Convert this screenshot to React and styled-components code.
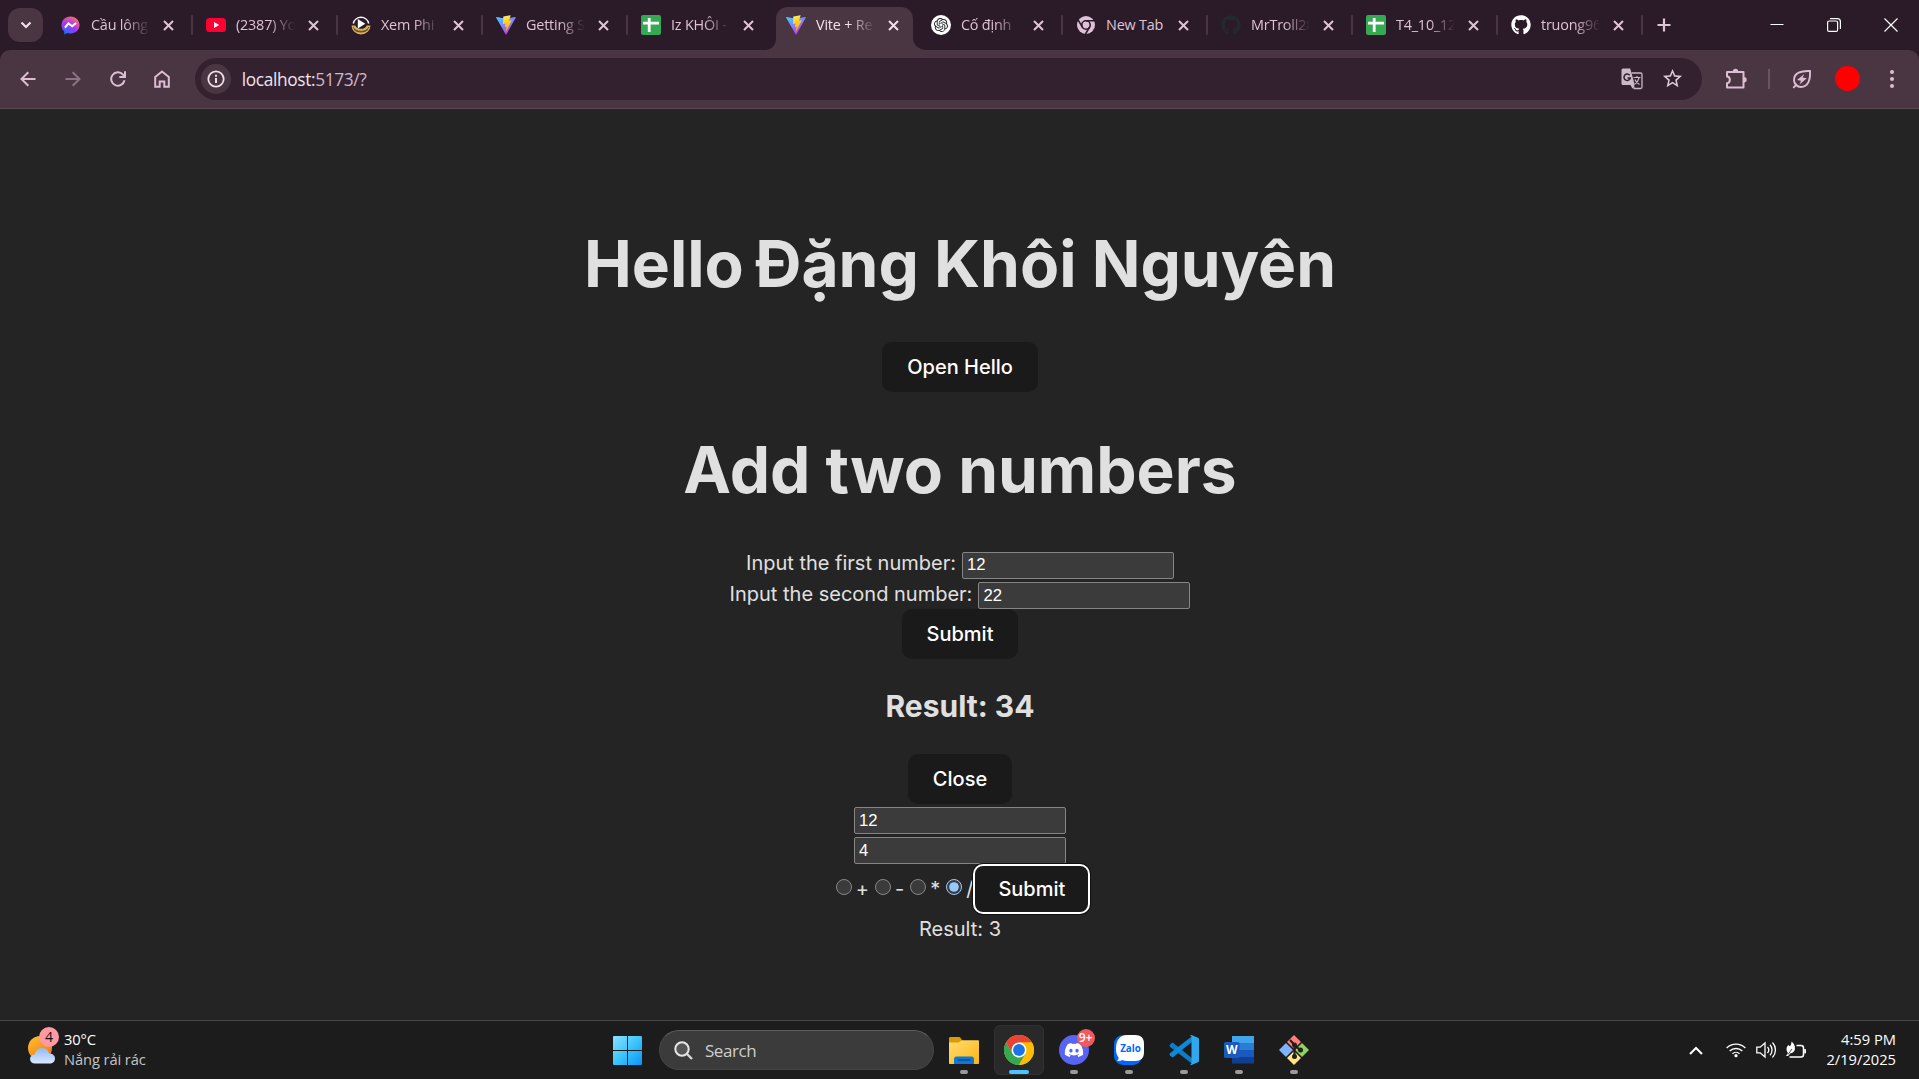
import React from "react";
import styled, { createGlobalStyle, css } from "styled-components";
import { FaGithub, FaDiscord } from "react-icons/fa";
import { SiOpenai } from "react-icons/si";
import { MdStarBorder } from "react-icons/md";

const UI = '"Open Sans", "Noto Sans", sans-serif';

const Global = createGlobalStyle`
  *, *::before, *::after { box-sizing: border-box; }
  html, body { margin: 0; padding: 0; background: #242424; }
  body { overflow: hidden; color-scheme: dark; }
  svg { display: block; flex: none; }
`;

const Screen = styled.div`
  width: 1919px;
  height: 1079px;
  display: flex;
  flex-direction: column;
  font-family: ${UI};
`;

/* ---------- tab strip ---------- */
const Strip = styled.div`
  height: 50px;
  background: #2b1b29;
  display: flex;
  align-items: stretch;
  padding-left: 8px;
`;
const TabSearch = styled.div`
  width: 35px;
  height: 34px;
  margin-top: 8px;
  margin-right: 5px;
  border-radius: 12px;
  background: #4a3543;
  display: grid;
  place-items: center;
`;
const Tab = styled.div`
  position: relative;
  width: 145px;
  display: flex;
  align-items: center;
  padding-left: 13px;
  z-index: 0;
  ${(p) =>
    p.$sep &&
    css`
      &::after {
        content: "";
        position: absolute;
        right: 0;
        top: 15px;
        width: 2px;
        height: 20px;
        border-radius: 1px;
        background: #4a3543;
      }
    `}
`;
const ActiveShape = styled.svg`
  position: absolute;
  left: -9px;
  top: 7px;
  z-index: -1;
`;
const Favicon = styled.div`
  width: 20px;
  height: 20px;
  display: grid;
  align-items: center;
  justify-items: ${(p) => p.$justify || "center"};
`;
const TabTitle = styled.div`
  width: 59px;
  margin-left: 10px;
  overflow: hidden;
  white-space: nowrap;
  font-size: 14.4px;
  line-height: 22px;
  letter-spacing: -0.2px;
  color: ${(p) => (p.$active ? "#f2dfec" : "#dfc3d6")};
  ${(p) =>
    p.$fade &&
    css`
      mask-image: linear-gradient(to right, #000 56%, transparent 100%);
    `}
`;
const TabClose = styled.div`
  width: 20px;
  margin-left: 8px;
  display: grid;
  place-items: center;
`;
const NewTab = styled.div`
  width: 30px;
  margin-left: 6px;
  display: grid;
  place-items: center;
`;
const WindowControls = styled.div`
  margin-left: auto;
  display: flex;
`;
const WinBtn = styled.div`
  width: 57px;
  display: grid;
  place-items: center;
`;

/* ---------- toolbar ---------- */
const ToolbarWrap = styled.div`
  background: #2b1b29;
`;
const Toolbar = styled.div`
  height: 59px;
  background: #4a3543;
  border-bottom: 1px solid #5a4a55;
  border-radius: 10px 10px 0 0;
  display: flex;
  align-items: center;
  padding: 0 5px 1px 6px;
`;
const NavBtn = styled.div`
  width: 44.7px;
  display: grid;
  place-items: center;
  opacity: ${(p) => (p.$dim ? 0.45 : 1)};
`;
const Omnibox = styled.div`
  width: 1507px;
  height: 42px;
  margin-left: 10px;
  border-radius: 21px;
  background: #33212f;
  display: flex;
  align-items: center;
  padding: 0 18px 0 6px;
`;
const InfoCircle = styled.div`
  width: 30px;
  height: 30px;
  border-radius: 50%;
  background: #4a3543;
  display: grid;
  place-items: center;
`;
const Url = styled.div`
  flex: 1;
  margin-left: 11px;
  padding-top: 2px;
  font-size: 17.3px;
  line-height: 26px;
  letter-spacing: -0.35px;
  color: #f2e3ee;
`;
const Port = styled.span`
  color: #cdb8c7;
`;
const OmniIcons = styled.div`
  display: flex;
  align-items: center;
  gap: 18px;
`;
const ToolIcons = styled.div`
  flex: 1;
  display: flex;
  align-items: center;
  justify-content: flex-end;
`;
const ToolIcon = styled.div`
  width: ${(p) => p.$w}px;
  display: grid;
  place-items: center;
`;
const ToolDivider = styled.div`
  width: 2px;
  height: 20px;
  background: #6b5264;
`;
const Avatar = styled.div`
  width: 25px;
  height: 25px;
  border-radius: 50%;
  background: #ff0000;
`;

/* ---------- page ---------- */
const Page = styled.main`
  flex: 1;
  background: #242424;
  color: #e0e0e0;
  font-family: Inter, sans-serif;
  font-size: 20px;
  line-height: 30px;
  text-align: center;
  padding: 77px 0 0 1px;
`;
const Title = styled.h1`
  margin: 43px 0;
  font-size: 64px;
  line-height: 70px;
  font-weight: 700;
`;
const Greeting = styled.span`
  word-spacing: -3.8px;
`;
const Subtitle = styled.h2`
  margin: 25px 0;
  font-size: 30px;
  line-height: 45px;
  font-weight: 700;
`;
const Line = styled.div`
  display: flex;
  justify-content: center;
  align-items: ${(p) => (p.$baseline ? "baseline" : "center")};
  height: ${(p) => p.$h || 30}px;
`;
const Field = styled.input`
  width: 212px;
  height: 27px;
  margin: 0 0 0 ${(p) => p.$gap || 0}px;
  padding: 0 4px ${(p) => p.$lift || 0}px;
  border: 1px solid #858585;
  border-radius: 2px;
  background: #3b3b3b;
  color: #fff;
  font: 16.67px "Liberation Sans", Arial, sans-serif;
  outline: none;
`;
const Button = styled.button`
  height: 50px;
  padding: 0 23px;
  border: 2px solid ${(p) => (p.$focused ? "#fff" : "transparent")};
  box-shadow: ${(p) => (p.$focused ? "0 0 0 1px #101010" : "none")};
  border-radius: 10px;
  background: #1a1a1a;
  background-clip: border-box;
  color: #fff;
  font: 500 20px Inter, sans-serif;
`;
const Radio = styled.input`
  width: 16px;
  height: 16px;
  margin: 0 4px 4px 6px;
`;
const Op = styled.label`
  display: flex;
  align-items: center;
`;
const Output = styled.div`
  height: 30px;
`;

/* ---------- taskbar ---------- */
const Taskbar = styled.footer`
  height: 59px;
  border-top: 1px solid #454545;
  background: #1c1c1c;
  display: flex;
  align-items: center;
  color: #fff;
`;
const Weather = styled.div`
  width: 600px;
  padding-left: 28px;
  display: flex;
  align-items: center;
  gap: 4px;
`;
const Stack = styled.div`
  display: flex;
  flex-direction: column;
  padding-bottom: 2px;
  font-size: 14.7px;
  line-height: 20px;
  letter-spacing: ${(p) => p.$ls || 0}px;
  text-align: ${(p) => p.$align || "left"};
`;
const Muted = styled.span`
  color: #c4c4c4;
`;
const Start = styled.div`
  width: 55px;
  display: grid;
  place-items: center;
`;
const SearchBox = styled.div`
  width: 275px;
  height: 40px;
  margin-left: 4px;
  margin-right: 2px;
  border-radius: 20px;
  border: 1px solid #454545;
  border-top-color: #5d5d5d;
  background: #3b3b3b;
  display: flex;
  align-items: center;
  gap: 12px;
  padding-left: 14px;
  font-size: 17px;
  letter-spacing: -0.45px;
  color: #cfcfcf;
`;
const AppSlot = styled.div`
  width: 55px;
  display: flex;
  justify-content: center;
`;
const AppTile = styled.div`
  width: 50px;
  height: 50px;
  border-radius: 6px;
  padding-top: 9px;
  display: flex;
  flex-direction: column;
  align-items: center;
  justify-content: space-between;
  background: ${(p) => (p.$active ? "#292929" : "transparent")};
  border: 1px solid ${(p) => (p.$active ? "#323232" : "transparent")};
`;
const Indicator = styled.div`
  width: ${(p) => (p.$active ? 20 : 8)}px;
  height: 4px;
  border-radius: 2px;
  background: ${(p) => (p.$active ? "#4cc2ff" : "#9a9a9a")};
`;
const IconBox = styled.div`
  position: relative;
  width: 30px;
  height: 30px;
`;
const Badge = styled.div`
  position: absolute;
  top: -6px;
  right: -6px;
  width: 18px;
  height: 18px;
  border-radius: 50%;
  background: #f05a5f;
  color: #fff;
  font-size: 12px;
  font-weight: 600;
  line-height: 17px;
  text-align: center;
`;
const WeatherIcon = styled.div`
  position: relative;
  width: 32px;
  height: 28px;
`;
const WeatherBadge = styled.div`
  position: absolute;
  left: 11px;
  top: -9px;
  width: 20px;
  height: 20px;
  border-radius: 50%;
  background: #ff99a4;
  color: #111;
  font-size: 14px;
  line-height: 20px;
  text-align: center;
`;
const Tray = styled.div`
  margin-left: auto;
  padding-right: 23px;
  display: flex;
  align-items: center;
`;
const TrayIcon = styled.div`
  width: 30px;
  display: grid;
  place-items: center;
  margin-right: ${(p) => p.$mr || 0}px;
`;
const Clock = styled(Stack)`
  width: 85px;
`;

/* ---------- icons ---------- */
const Messenger = () => (
  <svg width="19" height="19" viewBox="0 0 20 20">
    <defs>
      <radialGradient id="ms" cx="0.2" cy="1" r="1.1">
        <stop offset="0" stopColor="#0a7cff" />
        <stop offset="0.55" stopColor="#a033ff" />
        <stop offset="1" stopColor="#ff6b6b" />
      </radialGradient>
    </defs>
    <path fill="url(#ms)" d="M10 .5C4.500.5.5 4.500.5 9.700c0 2.800 1.100 5 3 6.700v3.100l2.900-1.500c1.100.3 2.300.5 3.600.5 5.500 0 9.500-3.900 9.500-8.900S15.500.5 10 .5z" />
    <path fill="none" stroke="#fff" strokeWidth="2.200" d="M4.200 12.200 7.800 7.800l4 3 4-3.500" />
  </svg>
);
const Youtube = () => (
  <svg width="20" height="20" viewBox="0 0 20 20">
    <rect y="3" width="20" height="14" rx="3.500" fill="#ff0033" />
    <path fill="#fff" d="M8 7v6l5.200-3z" />
  </svg>
);
const Movie = () => (
  <svg width="20" height="20" viewBox="0 0 20 20">
    <path d="M2.300 8.500a7.900 7.900 0 0 1 15.400 0" fill="none" stroke="#fff" strokeWidth="1.500" />
    <path d="M.5 10.500h3.700a6.300 5.500 0 0 0 11.600 0h3.700a9.500 9 0 0 1-19 0z" fill="#d8b25a" />
    <path d="M2 12a8.500 6.500 0 0 0 16 0M3 14.500a8 5 0 0 0 14 0" fill="none" stroke="#4a3524" strokeWidth=".8" />
    <path d="M6.800 4v9.500l7.500-4.800z" fill="#fff" />
  </svg>
);
const Vite = () => (
  <svg width="20" height="20" viewBox="0 0 20 20">
    <defs>
      <linearGradient id="va" x1="0" y1="0" x2=".6" y2="1">
        <stop offset="0" stopColor="#41d1ff" />
        <stop offset="1" stopColor="#bd34fe" />
      </linearGradient>
      <linearGradient id="vb" x1=".4" y1="0" x2=".6" y2="1">
        <stop offset="0" stopColor="#ffea83" />
        <stop offset=".2" stopColor="#ffdd35" />
        <stop offset="1" stopColor="#ffa800" />
      </linearGradient>
    </defs>
    <path fill="url(#va)" d="M19.700 2.800 10.500 19.300c-.2.300-.7.300-.9 0L.2 2.800c-.2-.4.1-.8.5-.7L10 3.700l9.200-1.600c.4-.1.700.3.500.7z" />
    <path fill="url(#vb)" d="M14.300.2 7.500 1.500c-.1 0-.2.100-.2.200l-.4 7.100c0 .2.100.3.300.2l1.900-.4c.2 0 .3.100.3.300l-.6 2.800c0 .2.100.3.300.3l1.200-.4c.2 0 .3.100.3.300l-.9 4.300c-.1.300.3.400.4.200l5.600-10.800c.1-.2 0-.4-.3-.3l-2 .4c-.2 0-.3-.1-.3-.3l1.500-4.900c0-.2-.1-.4-.3-.3z" />
  </svg>
);
const Sheets = () => (
  <svg width="20" height="20" viewBox="0 0 20 20">
    <rect width="20" height="20" rx="2" fill="#34a853" />
    <path stroke="#fff" strokeWidth="2.800" d="M8.200 3v14M2 8.200h16" />
  </svg>
);
const OpenAI = () => (
  <svg width="20" height="20" viewBox="0 0 20 20">
    <circle cx="10" cy="10" r="10" fill="#fff" />
    <SiOpenai x="3" y="3" size={14} color="#222" />
  </svg>
);
const ChromeMono = () => (
  <svg width="18" height="18" viewBox="0 0 18 18">
    <circle cx="9" cy="9" r="9" fill="#e0bfd8" />
    <circle cx="9" cy="9" r="4.200" fill="none" stroke="#2b1b29" strokeWidth="1.600" />
    <path stroke="#2b1b29" strokeWidth="1.600" fill="none" d="M9 4.800h8.500M5.400 11.100 1.100 3.900M12.600 11.100 8.500 18" />
  </svg>
);
const CloseX = ({ c = "#dfc3d6" }) => (
  <svg width="11" height="11" viewBox="0 0 11 11">
    <path d="m1 1 9 9m0-9-9 9" stroke={c} strokeWidth="2" />
  </svg>
);
const line = { fill: "none", stroke: "#dcbdd3", strokeWidth: 2 };
const Chrome = () => (
  <svg width="30" height="30" viewBox="0 0 30 30">
    <circle cx="15" cy="15" r="15" fill="#fbbc04" />
    <path fill="#ea4335" d="M2 7.500A15 15 0 0 1 28 7.500H15L8.500 18.750z" />
    <path fill="#34a853" d="M2 7.500A15 15 0 0 0 15 30l6.500-11.250h-13z" />
    <path fill="#fbbc04" d="M28 7.500A15 15 0 0 1 15 30l6.500-11.250L21.500 11.250 15 7.500z" />
    <circle cx="15" cy="15" r="7.500" fill="#fff" />
    <circle cx="15" cy="15" r="5.900" fill="#1a73e8" />
  </svg>
);
const Folder = () => (
  <svg width="30" height="30" viewBox="0 0 30 30">
    <defs>
      <linearGradient id="fo" x2="1" y2="1">
        <stop stopColor="#ffdc70" />
        <stop offset="1" stopColor="#fbb615" />
      </linearGradient>
    </defs>
    <path fill="#dc9a06" d="M0 3.500C0 2.500.6 2 1.500 2h8c1 0 1.700.5 2.300 1.300L13.500 6 10 9H0z" />
    <path fill="url(#fo)" d="M0 7.500h9.500l3.500-2.300h16c.6 0 1 .4 1 1V28c0 .6-.4 1-1 1H1c-.6 0-1-.4-1-1z" />
    <path fill="#0f78d4" d="M5 29v-5c0-1.500 1-2.500 2.500-2.500h15c1.500 0 2.500 1 2.500 2.500v5z" />
    <path stroke="#064f94" strokeWidth="1.500" d="M8.500 25h13" />
  </svg>
);
const DiscordIcon = () => (
  <svg width="30" height="30" viewBox="0 0 30 30">
    <circle cx="15" cy="15" r="15" fill="#5865f2" />
    <FaDiscord x="5" y="5" size={20} color="#fff" />
  </svg>
);
const Zalo = () => (
  <svg width="30" height="30" viewBox="0 0 30 30">
    <rect width="28" height="30" rx="9" fill="#0068ff" />
    <path fill="#fff" d="M13 0h8c6 0 9 3 9 9v8c0 6-3 9-9 9h-7c-2 0-4-.3-5.500-1-1.500 1-3.500 1.300-5.500 1 1-.7 1.700-2 1.500-3.500C2.700 20 2 17.500 2 14 2 5 6 0 13 0z" />
    <text x="16.500" y="17.300" fontFamily="Open Sans" fontWeight="700" fontSize="9.800" fill="#0068ff" textAnchor="middle">Zalo</text>
  </svg>
);
const VSCode = () => (
  <svg width="30" height="30" viewBox="0 0 30 30">
    <path fill="#0f7cc4" d="M1 9.500 2.800 8c.5-.4 1-.4 1.500 0L24 24v5.500L1.200 12c-.8-.8-.8-1.700-.2-2.500z" />
    <path fill="#0a8ad8" d="M1 20.500 2.800 22c.5.400 1 .4 1.500 0L24 6V.5L1.200 18c-.8.800-.8 1.700-.2 2.500z" />
    <path fill="#2fa9ee" d="m22.500 0 6.500 2.800c.6.300 1 .8 1 1.500v21.400c0 .7-.4 1.200-1 1.500L22.500 30c-.8.200-1.400 0-2-.7 1 .6 2 0 2-1.300V2c0-1.200-1-1.900-2-1.300.6-.6 1.200-.9 2-.7z" />
  </svg>
);
const Word = () => (
  <svg width="30" height="30" viewBox="0 0 30 30">
    <rect x="8" y="1" width="22" height="7" fill="#41a5ee" />
    <rect x="8" y="8" width="22" height="7" fill="#2b7cd3" />
    <rect x="8" y="15" width="22" height="7" fill="#185abd" />
    <rect x="8" y="22" width="22" height="6.500" fill="#103f91" />
    <rect y="7" width="15.500" height="16" rx="1.500" fill="#185abd" />
    <text x="7.700" y="19.300" fontFamily="Open Sans" fontWeight="700" fontSize="12" fill="#fff" textAnchor="middle">W</text>
  </svg>
);
const Git = () => (
  <svg width="30" height="30" viewBox="0 0 30 30">
    <path fill="#ff7f7f" d="m15 0 7.500 7.500L15 15 7.500 7.500z" />
    <path fill="#8cd35f" d="m22.500 7.500 7.500 7.500-7.500 7.500L15 15z" />
    <path fill="#80b3ff" d="m7.500 7.500 7.500 7.500-7.500 7.500L0 15z" />
    <path fill="#ffe680" d="m15 15 7.500 7.500L15 30l-7.500-7.500z" />
    <path stroke="#1c1c1c" strokeWidth="1.600" d="m6.500 6.500 17 17m0-17-17 17" />
    <path fill="none" stroke="#241f1c" strokeWidth="2.200" d="m11 5 4.500 5v12M15.500 10l6 5.500" />
    <circle cx="15.500" cy="10" r="2.500" fill="#241f1c" />
    <circle cx="21.500" cy="15" r="2.500" fill="#241f1c" />
    <circle cx="15.500" cy="21.500" r="2.500" fill="#241f1c" />
  </svg>
);
const Windows = () => (
  <svg width="29" height="29" viewBox="0 0 29 29">
    <defs>
      <linearGradient id="wi" x2="1" y2="1">
        <stop stopColor="#8ae2ff" />
        <stop offset=".5" stopColor="#3cc5fb" />
        <stop offset="1" stopColor="#0b93f5" />
      </linearGradient>
    </defs>
    <path fill="url(#wi)" d="M1 0h13v14H0V1a1 1 0 0 1 1-1zM15 0h13a1 1 0 0 1 1 1v13H15zM0 15h14v14H1a1 1 0 0 1-1-1zM15 15h14v13a1 1 0 0 1-1 1H15z" />
  </svg>
);

const tabs = [
  { title: "Cầu lông", icon: <Messenger />, justify: "start", fade: true, sep: true },
  { title: "(2387) Yo", icon: <Youtube />, fade: true, sep: true },
  { title: "Xem Phi", icon: <Movie />, fade: true, sep: true },
  { title: "Getting S", icon: <Vite />, fade: true, sep: true },
  { title: "Iz KHÔI -", icon: <Sheets />, fade: true },
  { title: "Vite + Re", icon: <Vite />, fade: true, active: true },
  { title: "Cố định", icon: <OpenAI />, fade: true, sep: true },
  { title: "New Tab", icon: <ChromeMono />, sep: true },
  { title: "MrTroll28", icon: <FaGithub size={20} color="#24292e" />, fade: true, sep: true },
  { title: "T4_10_12", icon: <Sheets />, fade: true, sep: true },
  { title: "truong96", icon: <FaGithub size={20} color="#fff" />, fade: true, sep: true },
];

const apps = [
  { icon: <Folder /> },
  { icon: <Chrome />, active: true },
  { icon: <DiscordIcon />, badge: "9+" },
  { icon: <Zalo /> },
  { icon: <VSCode /> },
  { icon: <Word /> },
  { icon: <Git /> },
];

function TabStrip() {
  return (
    <Strip>
      <TabSearch>
        <svg width="12" height="8" viewBox="0 0 12 8">
          <path d="m1.500 1.500 4.500 4.500 4.500-4.500" fill="none" stroke="#f0dcea" strokeWidth="2.200" />
        </svg>
      </TabSearch>
      {tabs.map((t) => (
        <Tab key={t.title} $sep={t.sep}>
          {t.active && (
            <ActiveShape width="164" height="43" viewBox="0 0 164 43">
              <path fill="#4a3543" d="M0 43c9 0 12-6 12-12V12C12 5 17 0 24 0h113c7 0 12 5 12 12v19c0 6 5 12 14 12z" />
            </ActiveShape>
          )}
          <Favicon $justify={t.justify}>{t.icon}</Favicon>
          <TabTitle $fade={t.fade} $active={t.active}>{t.title}</TabTitle>
          <TabClose><CloseX c={t.active ? "#f2dfec" : undefined} /></TabClose>
        </Tab>
      ))}
      <NewTab>
        <svg width="14" height="14" viewBox="0 0 14 14">
          <path d="M7 .5v13M.5 7h13" stroke="#dfc3d6" strokeWidth="2.200" />
        </svg>
      </NewTab>
      <WindowControls>
        <WinBtn>
          <svg width="14" height="14" viewBox="0 0 14 14"><path d="M.5 6.500h13" stroke="#fff" /></svg>
        </WinBtn>
        <WinBtn>
          <svg width="14" height="14" viewBox="0 0 14 14" fill="none" stroke="#fff" strokeWidth="1.200">
            <rect x=".6" y="3" width="10" height="10.400" rx="1.500" />
            <path d="M3 .7h7.400c1.700 0 3 1.300 3 3V11" />
          </svg>
        </WinBtn>
        <WinBtn>
          <svg width="14" height="14" viewBox="0 0 14 14"><path d="m.5.5 13 13m0-13-13 13" stroke="#fff" strokeWidth="1.200" /></svg>
        </WinBtn>
      </WindowControls>
    </Strip>
  );
}

function BrowserToolbar() {
  return (
    <ToolbarWrap>
      <Toolbar>
        <NavBtn>
          <svg width="16" height="16" viewBox="0 0 16 16"><path {...line} d="M15.500 8H2M8.300 1.200 1.500 8l6.800 6.800" /></svg>
        </NavBtn>
        <NavBtn $dim>
          <svg width="16" height="16" viewBox="0 0 16 16"><path {...line} d="M.5 8H14M7.700 1.200 14.500 8l-6.800 6.800" /></svg>
        </NavBtn>
        <NavBtn>
          <svg width="16" height="16" viewBox="0 0 16 16">
            <path {...line} d="M14.500 9.300A6.700 6.700 0 1 1 13 3.600l1.500 1.700" />
            <path {...line} d="M15 .3v5.700H9.300" />
          </svg>
        </NavBtn>
        <NavBtn>
          <svg width="16" height="18" viewBox="0 0 16 18">
            <path {...line} d="M1.200 7 8 1.500 14.800 7v9.800h-4.500v-5.300H5.700v5.300H1.200z" />
          </svg>
        </NavBtn>
        <Omnibox>
          <InfoCircle>
            <svg width="18" height="18" viewBox="0 0 18 18">
              <circle cx="9" cy="9" r="7.700" fill="none" stroke="#f0dcea" strokeWidth="1.800" />
              <path stroke="#f0dcea" strokeWidth="2" d="M9 8v5M9 4.800v2" />
            </svg>
          </InfoCircle>
          <Url>localhost:<Port>5173/?</Port></Url>
          <OmniIcons>
            <svg width="22" height="22" viewBox="0 0 22 22">
              <path d="M10.500 5h9c.8 0 1.500.7 1.500 1.500V19c0 .8-.7 1.500-1.500 1.500h-6.300L9.500 8" fill="none" stroke="#cdb8c7" strokeWidth="1.300" />
              <path fill="#cdb8c7" d="M2 .5h7.200L13.800 17H2A1.500 1.500 0 0 1 .5 15.500V2A1.500 1.500 0 0 1 2 .5zM9.500 17h4l-2 3.800z" />
              <path d="M8.700 7.300A3.200 3.200 0 1 0 9.300 10H6.500" fill="none" stroke="#33212f" strokeWidth="1.500" />
              <path d="M12.500 9.500h7M16 8v1.500M18 9.800c-.6 2.800-2.300 5-4.200 6.200M13.800 11.500c1 2 2.700 4 4.700 5" fill="none" stroke="#cdb8c7" strokeWidth="1.200" />
            </svg>
            <MdStarBorder size={23} color="#dccad7" />
          </OmniIcons>
        </Omnibox>
        <ToolIcons>
          <ToolIcon $w={46}>
            <svg width="22" height="22" viewBox="0 0 22 22">
              <path {...line} strokeLinejoin="round" d="M2 4h16.500v15.500H2v-4.300c3.800-.2 3.800-6.500 0-6.700z" />
              <path fill="#dcbdd3" d="M7.800 3.500a2.700 2.700 0 0 1 5.400 0zM19 9a2.700 2.700 0 0 1 0 5.400z" />
            </svg>
          </ToolIcon>
          <ToolIcon $w={20}><ToolDivider /></ToolIcon>
          <ToolIcon $w={46}>
            <svg width="20" height="20" viewBox="0 0 20 20">
              <path {...line} strokeWidth="1.900" d="M18 2C9 1.500 2 4 2 11c0 4 3 7 7 7 7 0 9.500-7 9-16zM5 15l-3.700 3.800" />
              <path fill="#dcbdd3" d="m12.300 5-7.300 6 4 .8-1.500 3.700 7.300-6.200-4.200-.7z" />
            </svg>
          </ToolIcon>
          <ToolIcon $w={45}><Avatar /></ToolIcon>
          <ToolIcon $w={44}>
            <svg width="4" height="18" viewBox="0 0 4 18" fill="#dcbdd3">
              <circle cx="2" cy="2" r="2" /><circle cx="2" cy="9" r="2" /><circle cx="2" cy="16" r="2" />
            </svg>
          </ToolIcon>
        </ToolIcons>
      </Toolbar>
    </ToolbarWrap>
  );
}

function Content() {
  return (
    <Page>
      <Title><Greeting>Hello </Greeting>Đặng Khôi Nguyên</Title>
      <Line $h={50}><Button>Open Hello</Button></Line>
      <Title>Add two numbers</Title>
      <Line $baseline $h={30.5}>Input the first number:<Field $gap={6} defaultValue="12" /></Line>
      <Line $baseline $h={30.5}>Input the second number:<Field $gap={6} defaultValue="22" /></Line>
      <Line $h={50}><Button>Submit</Button></Line>
      <Subtitle>Result: 34</Subtitle>
      <Line $h={50}><Button>Close</Button></Line>
      <Line $h={33}><Field defaultValue="12" /></Line>
      <Line $h={27}><Field defaultValue="4" /></Line>
      <Line $h={50}>
        {["+", "-", "*", "/"].map((op) => (
          <Op key={op}>
            <Radio type="radio" name="op" defaultChecked={op === "/"} />
            {op}
          </Op>
        ))}
        <Button $focused>Submit</Button>
      </Line>
      <Output>Result: 3</Output>
    </Page>
  );
}

function WindowsTaskbar() {
  return (
    <Taskbar>
      <Weather>
        <WeatherIcon>
          <svg width="28" height="28" viewBox="0 0 28 28">
            <defs>
              <linearGradient id="su" x2=".6" y2="1"><stop stopColor="#ffc22e" /><stop offset="1" stopColor="#f07d12" /></linearGradient>
              <linearGradient id="cl" x2="0" y2="1"><stop stopColor="#92b8f4" /><stop offset="1" stopColor="#dce9ff" /></linearGradient>
            </defs>
            <circle cx="12" cy="12" r="12" fill="url(#su)" />
            <path fill="url(#cl)" d="M7 27.500c-3 0-5-2-5-4.500s2-4.500 4.700-4.500C7.500 14.500 10.500 12 14 12c3.700 0 6.300 2.300 7 5.500 3.500-.3 6 2 6 5s-2.300 5-5.500 5z" />
          </svg>
          <WeatherBadge>4</WeatherBadge>
        </WeatherIcon>
        <Stack $ls={-0.1}><span>30°C</span><Muted>Nắng rải rác</Muted></Stack>
      </Weather>
      <Start><Windows /></Start>
      <SearchBox>
        <svg width="19" height="19" viewBox="0 0 19 19">
          <circle cx="8" cy="8" r="6.700" fill="#555" stroke="#e8e8e8" strokeWidth="2" />
          <path d="m13 13 5 5" stroke="#d8d8d8" strokeWidth="2.400" />
        </svg>
        Search
      </SearchBox>
      {apps.map((a, i) => (
        <AppSlot key={i}>
          <AppTile $active={a.active}>
            <IconBox>{a.icon}{a.badge && <Badge>{a.badge}</Badge>}</IconBox>
            <Indicator $active={a.active} />
          </AppTile>
        </AppSlot>
      ))}
      <Tray>
        <TrayIcon $mr={10}>
          <svg width="14" height="9" viewBox="0 0 14 9"><path d="m1 8 6-6 6 6" fill="none" stroke="#fff" strokeWidth="2" /></svg>
        </TrayIcon>
        <TrayIcon>
          <svg width="20" height="16" viewBox="0 0 20 16" fill="none" stroke="#fff" strokeWidth="1.400">
            <path d="M.7 6a13 13 0 0 1 18.600 0M3.700 9a9 9 0 0 1 12.600 0M6.500 11.800a5 5 0 0 1 7 0" />
            <circle cx="10" cy="13.700" r="1.600" fill="#fff" stroke="none" />
          </svg>
        </TrayIcon>
        <TrayIcon>
          <svg width="21" height="18" viewBox="0 0 21 18" fill="none" stroke="#fff" strokeWidth="1.300">
            <path d="M.8 6.200h3.400L9 2v14l-4.800-4.200H.8zM11.500 6a4.500 4.500 0 0 1 0 6M14 3.800a7.600 7.600 0 0 1 0 10.400M16.500 1.500a11 11 0 0 1 0 15" />
          </svg>
        </TrayIcon>
        <TrayIcon>
          <svg width="20" height="18" viewBox="0 0 20 18">
            <path d="M10.500 4.500H15c1.500 0 2.500.8 2.500 2.500v6.500c0 1.500-1 2.500-2.500 2.500H3.500" fill="none" stroke="#fff" strokeWidth="1.500" />
            <path fill="#fff" d="M18.200 8h.8c.6 0 1 .5 1 1v2.500c0 .6-.4 1-1 1h-.8zM5.500.5C8.500 3 9.500 6 8.700 9c-.6 2-2.200 3.200-4.200 3.200L2 15H0l2-3C-.5 8.500.5 5.500 2.500 4c.4.600.8 1 1.500 1.200C4.800 4 5.500 2.500 5.500.5z" />
            <path d="M2 13.500 6 8M6.500 13.500l2.500-1" stroke="#1c1c1c" strokeWidth=".8" />
          </svg>
        </TrayIcon>
        <Clock $align="right"><span>4:59 PM</span><span>2/19/2025</span></Clock>
      </Tray>
    </Taskbar>
  );
}

export default function App() {
  return (
    <Screen>
      <Global />
      <TabStrip />
      <BrowserToolbar />
      <Content />
      <WindowsTaskbar />
    </Screen>
  );
}
